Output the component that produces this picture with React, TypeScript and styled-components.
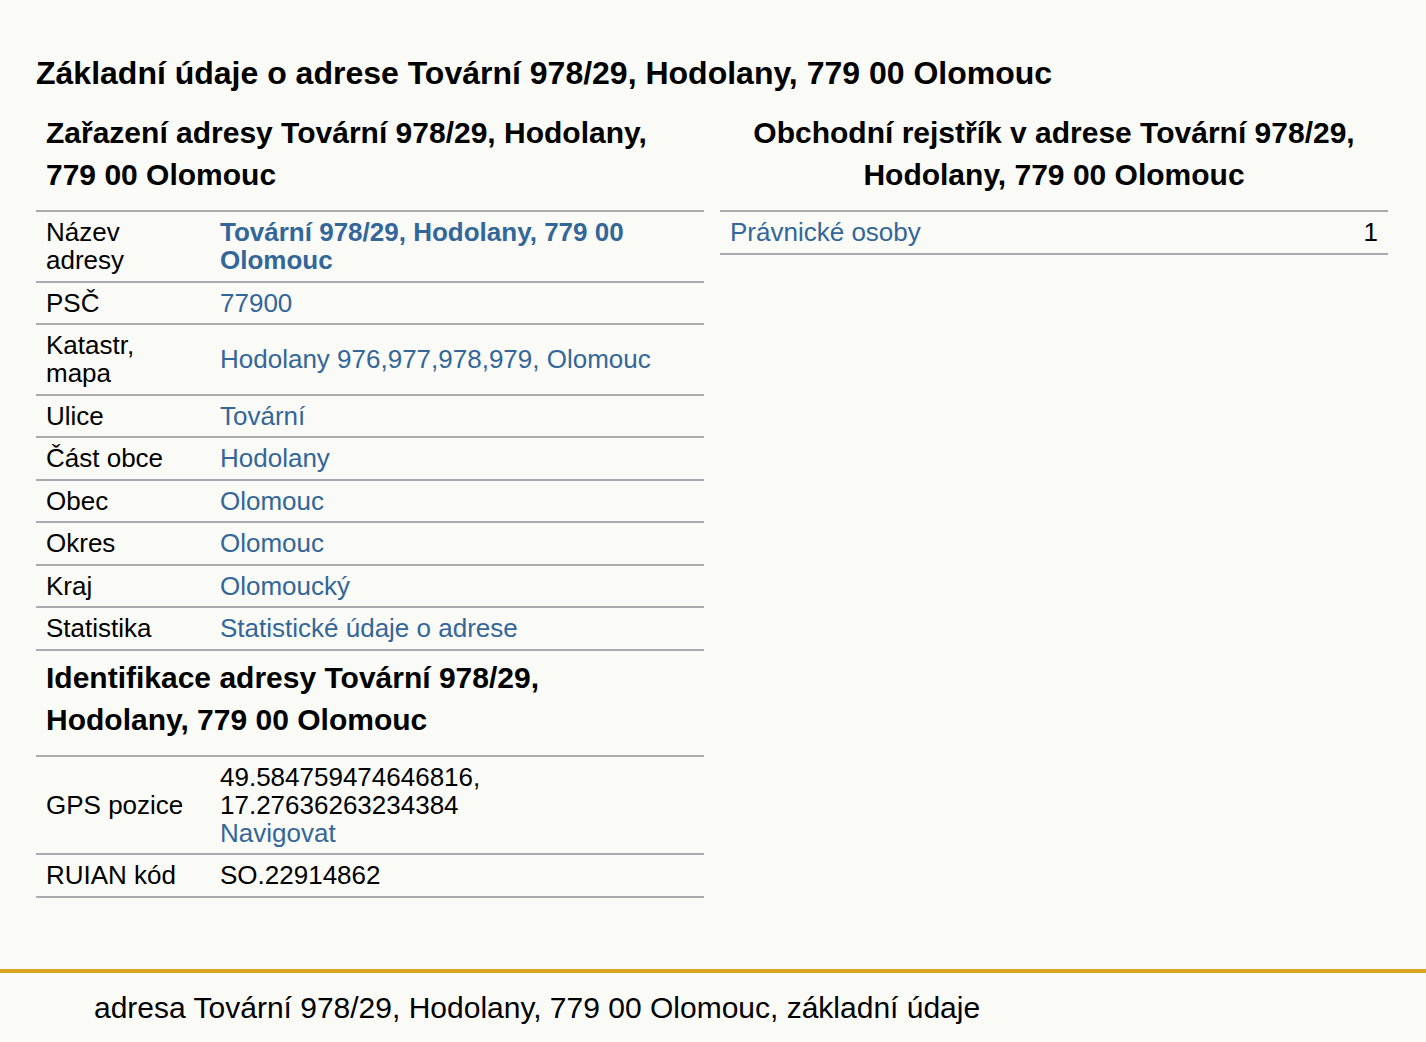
import React from "react";
import styled, { createGlobalStyle } from "styled-components";

const GlobalStyle = createGlobalStyle`
  html, body { margin: 0; padding: 0; background: #fafaf6; }
  body { font-family: "Liberation Sans", Arial, sans-serif; color: #000; }
`;

const Page = styled.div`
  min-height: 1042px;
  display: flex;
  flex-direction: column;
`;

const Main = styled.main`
  padding: 52px 38px 0 36px;
  height: 969px;
  box-sizing: border-box;
`;

const Title = styled.h1`
  margin: 0 0 18px 0;
  font-size: 32px;
  line-height: 42px;
  font-weight: bold;
`;

const Columns = styled.div`
  display: grid;
  grid-template-columns: 668px 668px;
  column-gap: 16px;
  align-items: start;
`;

const Column = styled.section``;

const SectionTitle = styled.h2<{ $center?: boolean; $top?: number }>`
  margin: ${(p) => p.$top ?? 0}px 0 14px 0;
  padding: ${(p) => (p.$center ? "0 10px" : "0 40px 0 10px")};
  font-size: 30px;
  line-height: 42px;
  font-weight: bold;
  text-align: ${(p) => (p.$center ? "center" : "left")};
`;

const Table = styled.div`
  border-top: 2px solid #aaa;
`;

const Row = styled.div<{ $cols?: string }>`
  display: grid;
  grid-template-columns: ${(p) => p.$cols ?? "174px 1fr"};
  align-items: center;
  border-bottom: 2px solid #aaa;
`;

const Label = styled.div`
  padding: 6.25px 20px 6.25px 10px;
  font-size: 26px;
  line-height: 28px;
`;

const Value = styled.div<{ $right?: boolean }>`
  padding: 6.25px 10px;
  font-size: 26px;
  line-height: 28px;
  text-align: ${(p) => (p.$right ? "right" : "left")};
`;

const Link = styled.a<{ $bold?: boolean }>`
  color: #336699;
  text-decoration: none;
  font-weight: ${(p) => (p.$bold ? "bold" : "normal")};
`;

const Footer = styled.footer`
  border-top: 4px solid #daa520;
  padding: 15px 94px;
  font-size: 30px;
  line-height: 40px;
`;

const rows: { label: string; value: string }[] = [
  { label: "PSČ", value: "77900" },
  { label: "Katastr, mapa", value: "Hodolany 976,977,978,979, Olomouc" },
  { label: "Ulice", value: "Tovární" },
  { label: "Část obce", value: "Hodolany" },
  { label: "Obec", value: "Olomouc" },
  { label: "Okres", value: "Olomouc" },
  { label: "Kraj", value: "Olomoucký" },
  { label: "Statistika", value: "Statistické údaje o adrese" },
];

export default function App() {
  return (
    <Page>
      <GlobalStyle />
      <Main>
        <Title>Základní údaje o adrese Tovární 978/29, Hodolany, 779 00 Olomouc</Title>
        <Columns>
          <Column>
            <SectionTitle>Zařazení adresy Tovární 978/29, Hodolany, 779 00 Olomouc</SectionTitle>
            <Table>
              <Row>
                <Label>Název adresy</Label>
                <Value>
                  <Link href="#" $bold>
                    Tovární 978/29, Hodolany, 779 00 Olomouc
                  </Link>
                </Value>
              </Row>
              {rows.map((r) => (
                <Row key={r.label}>
                  <Label>{r.label}</Label>
                  <Value>
                    <Link href="#">{r.value}</Link>
                  </Value>
                </Row>
              ))}
            </Table>
            <SectionTitle $top={6}>Identifikace adresy Tovární 978/29, Hodolany, 779 00 Olomouc</SectionTitle>
            <Table>
              <Row>
                <Label>GPS pozice</Label>
                <Value>
                  49.584759474646816,
                  <br />
                  17.27636263234384
                  <br />
                  <Link href="#">Navigovat</Link>
                </Value>
              </Row>
              <Row>
                <Label>RUIAN kód</Label>
                <Value>SO.22914862</Value>
              </Row>
            </Table>
          </Column>
          <Column>
            <SectionTitle $center>Obchodní rejstřík v adrese Tovární 978/29, Hodolany, 779 00 Olomouc</SectionTitle>
            <Table>
              <Row $cols="1fr auto">
                <Value>
                  <Link href="#">Právnické osoby</Link>
                </Value>
                <Value $right>1</Value>
              </Row>
            </Table>
          </Column>
        </Columns>
      </Main>
      <Footer>adresa Tovární 978/29, Hodolany, 779 00 Olomouc, základní údaje</Footer>
    </Page>
  );
}
